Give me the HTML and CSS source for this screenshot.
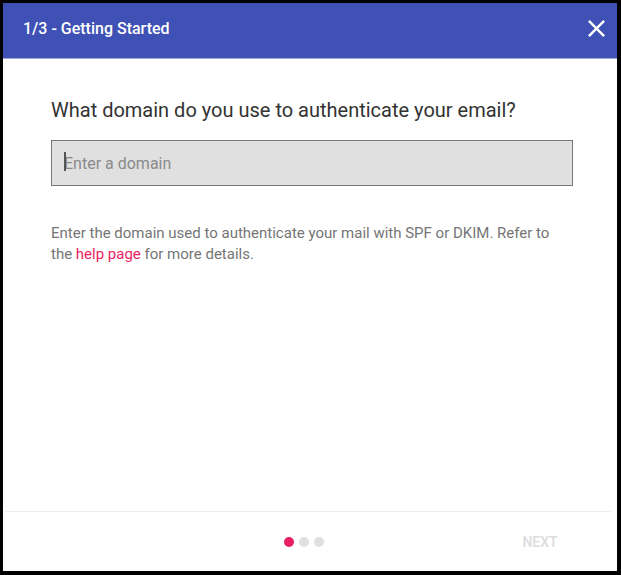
FILE: index.html
```html
<!DOCTYPE html>
<html lang="en">

<head>
  <meta charset="UTF-8">
  <title>Getting Started</title>
  <link rel="stylesheet" href="styles.css">
</head>

<body>

  <div class="wizard">

    <!-- Header -->
    <div class="wizard-header">
      <span class="wizard-title">1/3 - Getting Started</span>
      <button class="wizard-close" aria-label="Close">
        <svg viewBox="0 0 24 24" width="29" height="29">
          <path fill="#fff" d="M19 6.41L17.59 5 12 10.59 6.41 5 5 6.41 10.59 12 5 17.59 6.41 19 12 13.41 17.59 19 19 17.59 13.41 12z"/>
        </svg>
      </button>
    </div>

    <!-- Step content -->
    <div class="wizard-body">
      <h2 class="step-question">What domain do you use to authenticate your email?</h2>
      <div class="domain-field">
        <input type="text" class="domain-input" placeholder="Enter a domain">
        <span class="domain-caret"></span>
      </div>
      <p class="step-hint">
        Enter the domain used to authenticate your mail with SPF or DKIM. Refer to
        the <a href="#" class="hint-link">help page</a> for more details.
      </p>
    </div>

    <!-- Footer -->
    <div class="wizard-footer">
      <div></div>
      <div class="step-dots">
        <span class="step-dot active"></span>
        <span class="step-dot"></span>
        <span class="step-dot"></span>
      </div>
      <div class="footer-actions">
        <button class="next-btn" disabled>NEXT</button>
      </div>
    </div>

  </div>

</body>

</html>
```

FILE: styles.css
```css
* {
  box-sizing: border-box;
}

html,
body {
  height: 100%;
}

body {
  margin: 0;
  font-family: Roboto, "Noto Sans", sans-serif;
  background: #fff;
}

.wizard {
  display: flex;
  flex-direction: column;
  height: 575px;
  width: 621px;
  border: 3px solid #000;
  border-right-width: 4px;
  border-bottom-width: 4px;
  background: #fff;
}

.wizard-header {
  display: flex;
  align-items: center;
  justify-content: space-between;
  height: 56px;
  padding: 0 6px 5px 20px;
  background: #3f51b5;
  border-bottom: 1px solid #9fa8da;
}

.wizard-title {
  color: #fff;
  font-size: 16px;
  font-weight: 500;
}

.wizard-close {
  display: flex;
  padding: 0;
  margin: 0;
  border: none;
  background: none;
  cursor: pointer;
}

.wizard-body {
  flex: 1;
  padding: 39px 44px 0 48px;
}

.step-question {
  margin: 0;
  font-size: 20px;
  line-height: 24px;
  font-weight: 400;
  color: #333;
}

.domain-field {
  position: relative;
  margin-top: 18px;
}

.domain-input {
  display: block;
  width: 100%;
  height: 46px;
  padding: 0 12px;
  border: 1px solid #777;
  background: #e0e0e0;
  font-family: inherit;
  font-size: 16px;
  color: #333;
  outline: none;
}

.domain-input::placeholder {
  color: #8a8a8a;
}

.domain-caret {
  position: absolute;
  left: 13px;
  top: 12px;
  width: 1.5px;
  height: 19px;
  background: #555;
}

.step-hint {
  margin: 37px 0 0;
  font-size: 15px;
  line-height: 21px;
  color: #757575;
}

.hint-link {
  color: #e91e63;
  text-decoration: none;
}

.wizard-footer {
  display: grid;
  grid-template-columns: 1fr auto 1fr;
  align-items: center;
  height: 60px;
  margin: 0 6px 0 2px;
  padding-right: 8px;
  border-top: 1px solid #eee;
}

.step-dots {
  display: flex;
  gap: 5px;
}

.step-dot {
  width: 10px;
  height: 10px;
  border-radius: 50%;
  background: #e0e0e0;
}

.step-dot.active {
  background: #e91e63;
}

.footer-actions {
  display: flex;
  justify-content: flex-end;
}

.next-btn {
  min-width: 88px;
  height: 36px;
  margin-right: 19px;
  padding: 0 16px;
  border: none;
  background: none;
  font-family: inherit;
  font-size: 14px;
  font-weight: 500;
  color: #dcdcdc;
}
```
